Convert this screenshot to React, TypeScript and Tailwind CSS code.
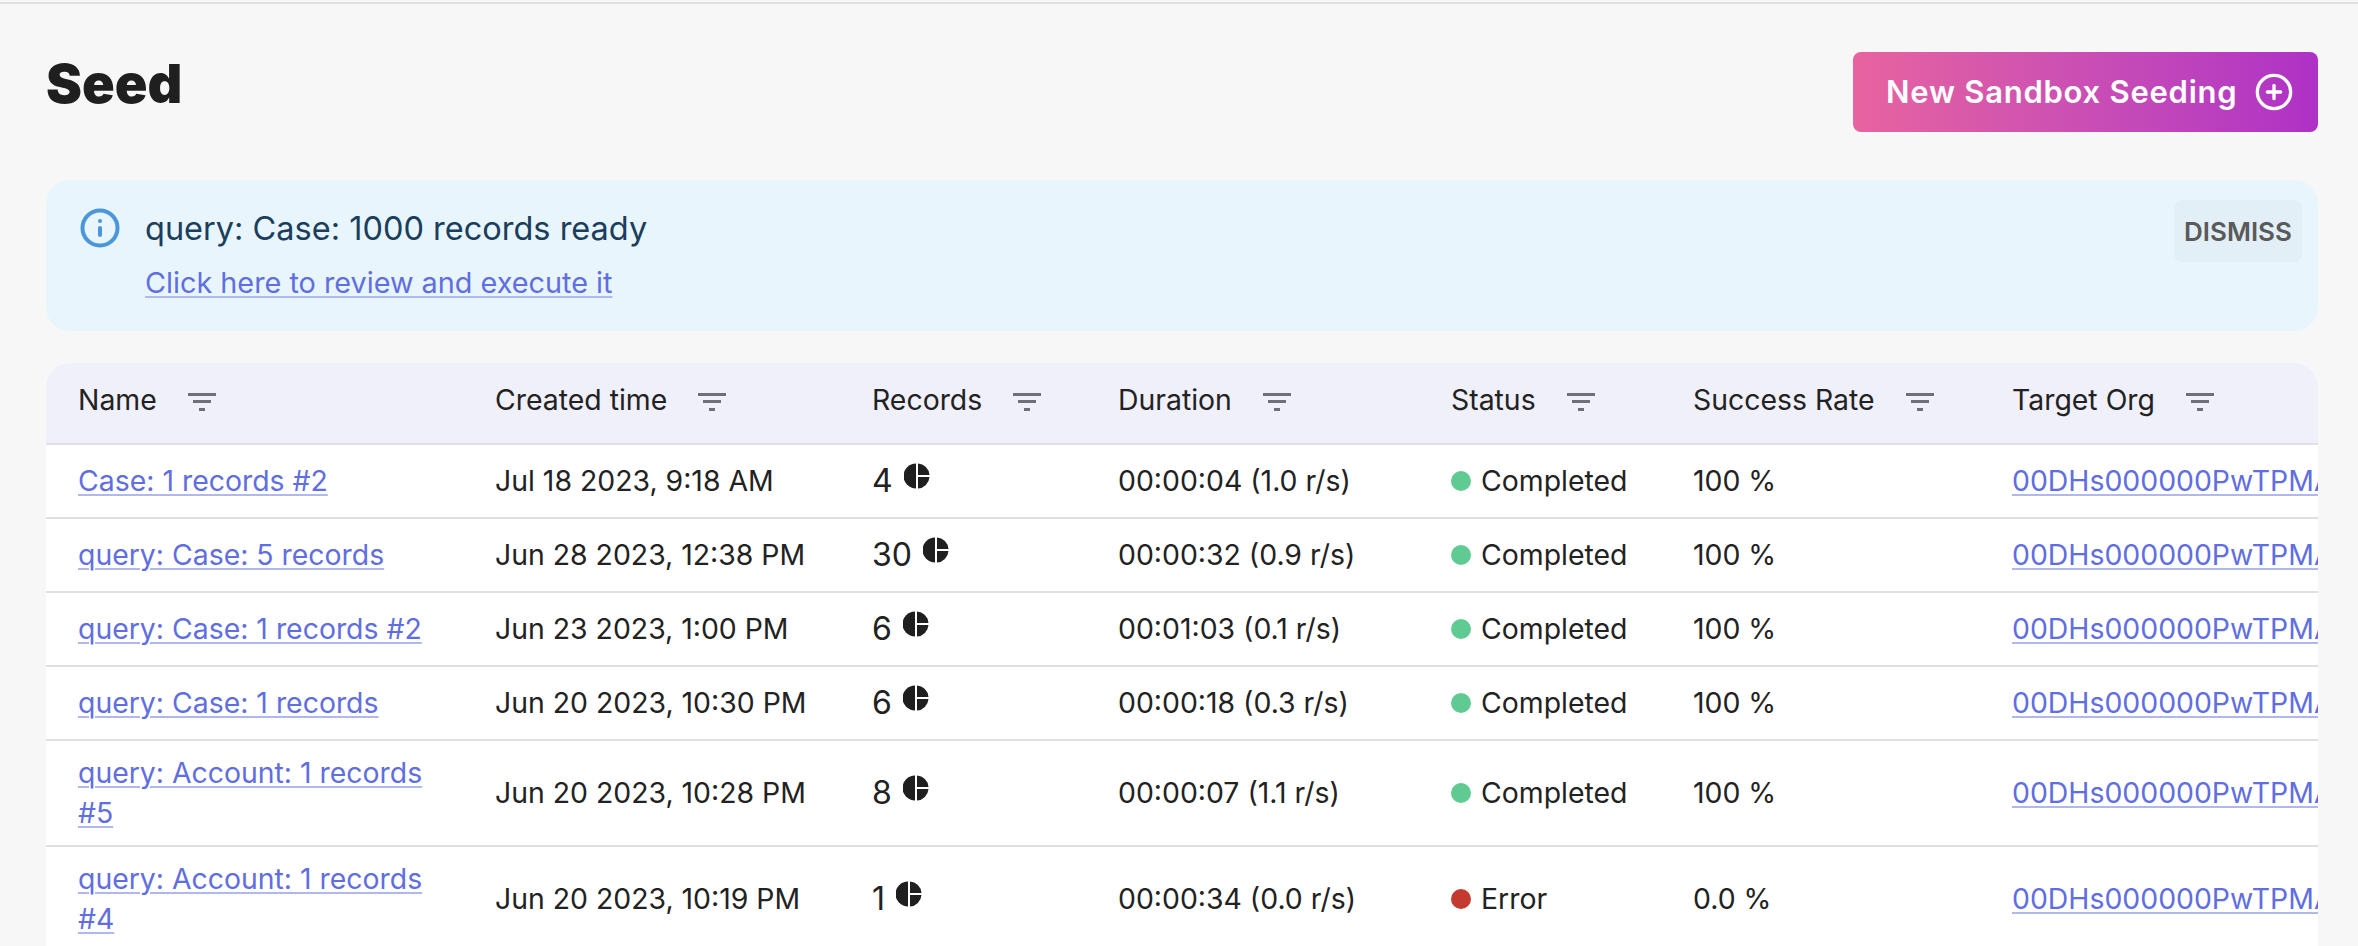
import { CirclePlus, Info } from "lucide-react";

type Row = {
  name: string;
  created: string;
  records: number;
  duration: string;
  status: "Completed" | "Error";
  rate: string;
};

const rows: Row[] = [
  { name: "Case: 1 records #2", created: "Jul 18 2023, 9:18 AM", records: 4, duration: "00:00:04 (1.0 r/s)", status: "Completed", rate: "100 %" },
  { name: "query: Case: 5 records", created: "Jun 28 2023, 12:38 PM", records: 30, duration: "00:00:32 (0.9 r/s)", status: "Completed", rate: "100 %" },
  { name: "query: Case: 1 records #2", created: "Jun 23 2023, 1:00 PM", records: 6, duration: "00:01:03 (0.1 r/s)", status: "Completed", rate: "100 %" },
  { name: "query: Case: 1 records", created: "Jun 20 2023, 10:30 PM", records: 6, duration: "00:00:18 (0.3 r/s)", status: "Completed", rate: "100 %" },
  { name: "query: Account: 1 records #5", created: "Jun 20 2023, 10:28 PM", records: 8, duration: "00:00:07 (1.1 r/s)", status: "Completed", rate: "100 %" },
  { name: "query: Account: 1 records #4", created: "Jun 20 2023, 10:19 PM", records: 1, duration: "00:00:34 (0.0 r/s)", status: "Error", rate: "0.0 %" },
];

const columns = [
  { label: "Name", width: "w-[417px]" },
  { label: "Created time", width: "w-[377px]" },
  { label: "Records", width: "w-[246px]" },
  { label: "Duration", width: "w-[333px]" },
  { label: "Status", width: "w-[242px]" },
  { label: "Success Rate", width: "w-[319px]" },
  { label: "Target Org", width: "w-[400px]" },
];

function FilterIcon() {
  return (
    <svg width="28" height="18" viewBox="0 0 28 18" className="mt-[5px] shrink-0 text-[#6f6f78]" fill="currentColor">
      <rect x="0" y="0" width="28" height="3" />
      <rect x="5" y="7" width="18" height="3" />
      <rect x="11" y="15" width="6" height="3" />
    </svg>
  );
}

function PieIcon() {
  return (
    <svg width="26" height="26" viewBox="0 0 26 26" className="shrink-0 text-[#1f1f1f]" fill="currentColor">
      <path d="M12 0.5A12.5 12.5 0 0 0 12 25.5Z" />
      <path d="M14 0.5A12.5 12.5 0 0 1 25.5 12H14Z" />
      <path d="M14 14H25.5A12.5 12.5 0 0 1 14 25.5Z" />
    </svg>
  );
}

const linkClass =
  "text-[#5f6ee0] underline decoration-[#b0b8f0] decoration-2 underline-offset-[3px]";

export default function App() {
  return (
    <div className="h-screen overflow-hidden bg-[#f7f7f7] pt-[2px] font-['Inter',sans-serif] text-[#222222]">
      <div className="border-t-2 border-[#e0e0e0] pt-[48px] pr-[40px] pl-[46px]">
        <div className="flex items-start justify-between">
          <h1 className="mt-[2px] text-[54px] leading-[60px] font-black text-[#1f1f1f]">Seed</h1>
          <button
            type="button"
            className="flex h-[80px] w-[465px] items-center gap-[17px] rounded-[8px] bg-gradient-to-r from-[#e8639f] to-[#ae30c6] pl-[33px] text-[31px] font-semibold tracking-[0.75px] text-white"
          >
            New Sandbox Seeding
            <CirclePlus size={40} strokeWidth={2} />
          </button>
        </div>

        <div className="mt-[48px] flex h-[151px] items-start justify-between rounded-[24px] bg-[#e8f5fd] pt-[21px] pr-[16px] pl-[36px]">
          <div className="flex gap-[24px]">
            <Info size={42} strokeWidth={2.3} className="mt-[6px] -ml-[3px] text-[#4a96d8]" />
            <div>
              <p className="text-[32.5px] leading-[55px] text-[#1a3e5c]">query: Case: 1000 records ready</p>
              <a href="#" className={`text-[28.8px] leading-[54px] ${linkClass}`}>
                Click here to review and execute it
              </a>
            </div>
          </div>
          <button
            type="button"
            className="-mt-[1px] h-[62px] w-[128px] rounded-[8px] bg-[#e3eff6] text-[26px] font-semibold text-[#5a5a5a]"
          >
            DISMISS
          </button>
        </div>

        <div className="mt-[32px] overflow-hidden rounded-t-[24px] bg-white">
          <table className="w-[2334px] table-fixed border-separate border-spacing-0 text-left text-[28.4px]">
            <thead>
              <tr className="bg-[#f0f0fb]">
                {columns.map((c) => (
                  <th key={c.label} className={`${c.width} h-[82px] border-b-2 border-[#e0e0e6] pb-[6px] pl-[32px] font-normal`}>
                    <div className="flex items-center gap-[31px]">
                      {c.label}
                      <FilterIcon />
                    </div>
                  </th>
                ))}
              </tr>
            </thead>
            <tbody>
              {rows.map((r) => (
                <tr key={r.name}>
                  <td className="h-[74px] border-b-2 border-[#e0e0e0] py-[12px] pr-[32px] pl-[32px] leading-[40px]">
                    <a href="#" className={linkClass}>{r.name}</a>
                  </td>
                  <td className="border-b-2 border-[#e0e0e0] pl-[32px]">{r.created}</td>
                  <td className="border-b-2 border-[#e0e0e0] pl-[32px]">
                    <div className="flex items-start gap-[11px]">
                      <span className="text-[32px] leading-[40px]">{r.records}</span>
                      <span className="mt-[2px]"><PieIcon /></span>
                    </div>
                  </td>
                  <td className="border-b-2 border-[#e0e0e0] pl-[32px]">{r.duration}</td>
                  <td className="border-b-2 border-[#e0e0e0] pl-[32px]">
                    <div className="flex items-center gap-[10px]">
                      <span className={`h-[20px] w-[20px] rounded-full ${r.status === "Error" ? "bg-[#c53a30]" : "bg-[#5fcb92]"}`} />
                      {r.status}
                    </div>
                  </td>
                  <td className="border-b-2 border-[#e0e0e0] pl-[32px]">{r.rate}</td>
                  <td className="border-b-2 border-[#e0e0e0] pl-[32px] whitespace-nowrap">
                    <a href="#" className={linkClass}>00DHs000000PwTPMA3</a>
                  </td>
                </tr>
              ))}
            </tbody>
          </table>
        </div>
      </div>
    </div>
  );
}
